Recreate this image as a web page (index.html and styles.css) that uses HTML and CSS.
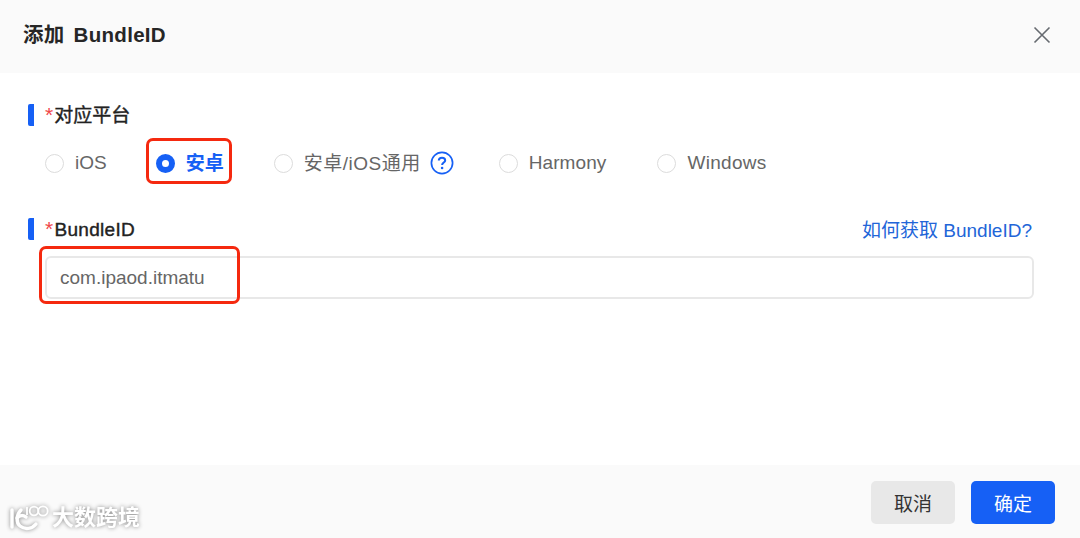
FILE: index.html
```html
<!DOCTYPE html>
<html lang="zh-CN">
<head>
  <meta charset="UTF-8">
  <title>添加 BundleID</title>
  <link rel="stylesheet" href="styles.css">
</head>
<body>
  <div class="dialog">
    <div class="dialog-header">
      <span class="dialog-title">添加 BundleID</span>
      <svg class="close-icon" width="18" height="18" viewBox="0 0 18 18"><path d="M1.5 1.5 L16.5 16.5 M16.5 1.5 L1.5 16.5" stroke="#666a70" stroke-width="1.6" fill="none"/></svg>
    </div>

    <div class="dialog-body">
      <div class="field field-platform">
        <div class="field-label"><span class="req">*</span>对应平台</div>
        <div class="radios">
          <label class="radio radio-ios"><i class="dot"></i>iOS</label>
          <label class="radio radio-android checked"><i class="dot"></i><span class="cjk-text">安卓</span></label>
          <label class="radio radio-both"><i class="dot"></i><span class="cjk-text both-text">安卓/iOS通用</span>
            <svg class="help-icon" width="24" height="24" viewBox="0 0 24 24"><circle cx="12" cy="12" r="10.6" fill="none" stroke="#1660f5" stroke-width="1.7"/><path d="M8.8 9.6 C8.8 7.7 10.2 6.7 12 6.7 C13.9 6.7 15.2 7.8 15.2 9.4 C15.2 11.4 12.1 11.7 12.1 14" fill="none" stroke="#1660f5" stroke-width="2"/><circle cx="12.1" cy="17" r="1.3" fill="#1660f5"/></svg>
          </label>
          <label class="radio radio-harmony"><i class="dot"></i>Harmony</label>
          <label class="radio radio-windows"><i class="dot"></i>Windows</label>
        </div>
      </div>

      <div class="field">
        <div class="label-row">
          <div class="field-label bundle-label"><span class="req">*</span>BundleID</div>
          <a class="help-link">如何获取 BundleID?</a>
        </div>
        <div class="input">com.ipaod.itmatu</div>
      </div>
    </div>

    <div class="dialog-footer">
      <button class="btn btn-cancel">取消</button>
      <button class="btn btn-ok">确定</button>
    </div>
  </div>

  <!-- red marks drawn on top of the screenshot -->
  <div class="mark mark-radio"></div>
  <div class="mark mark-input"></div>

  <div class="watermark">
    <svg width="42" height="30" viewBox="0 0 42 30"><g fill="none" stroke="#fff" stroke-width="3.4" stroke-linecap="round"><path d="M4 7 L4 24"/><path d="M13 7 C8 12 8 20 12 23 C17 27 24 26 28 21"/><path d="M9 15 C12 12 15 12 18 14"/></g><g fill="none" stroke="#fff" stroke-width="1.8"><path d="M19 4 L19 12"/><circle cx="26" cy="8" r="4.3"/><circle cx="35" cy="8" r="4.7"/></g></svg>
    <span class="watermark-text">大数跨境</span>
  </div>
</body>
</html>
```

FILE: styles.css
```css
* {
  box-sizing: border-box;
}
html, body {
  margin: 0;
  height: 100%;
}
body {
  position: relative;
  overflow: hidden;
  background: #fff;
  font-family: "Liberation Sans", "Noto Sans CJK SC", sans-serif;
  color: #222;
}
.dialog {
  display: flex;
  flex-direction: column;
  height: 538px;
}
.dialog-header {
  height: 73px;
  background: #fafafa;
  display: flex;
  align-items: center;
  justify-content: space-between;
  padding: 0 29px 4px 23px;
}
.dialog-title {
  font-size: 20.5px;
  font-weight: 600;
  word-spacing: 3px;
  letter-spacing: 0.3px;
  color: #262626;
  margin-bottom: 4px;
}
.dialog-body {
  flex: 1;
  padding: 31px 46px 0 28px;
}
.field-platform {
  margin-bottom: 40px;
}
.field-label {
  border-left: 6px solid #1660f5;
  border-radius: 2px;
  height: 22px;
  line-height: 24px;
  padding-left: 11px;
  font-size: 19px;
  font-weight: 400;
  color: #222;
  -webkit-text-stroke: 0.4px #222;
}
.bundle-label {
  letter-spacing: 0.3px;
}
.req {
  color: #f0474a;
  font-size: 21px;
  line-height: 1;
  margin-right: 1px;
  -webkit-text-stroke: 0;
}
.radios {
  display: flex;
  align-items: center;
  height: 24px;
  margin-top: 25px;
  padding-left: 17px;
}
.radio {
  display: flex;
  align-items: center;
  font-size: 19px;
  color: #666;
}
.radio-ios {
  margin-right: 49px;
}
.radio-android {
  margin-right: 50px;
}
.radio-both {
  margin-right: 45px;
}
.cjk-text {
  margin-bottom: 3px;
}
.both-text {
  letter-spacing: 0.5px;
}
.radio-harmony {
  letter-spacing: 0.1px;
  margin-right: 51px;
}
.radio-windows {
  letter-spacing: 0.3px;
}
.dot {
  width: 19px;
  height: 19px;
  border: 1.5px solid #dcdcdc;
  border-radius: 50%;
  margin-right: 11px;
  background: #fff;
}
.checked {
  color: #1660f5;
  font-weight: 600;
}
.checked .dot {
  border: 6.5px solid #1660f5;
}
.help-icon {
  margin-left: 9px;
}
.label-row {
  display: flex;
  justify-content: space-between;
  align-items: center;
}
.help-link {
  font-size: 19px;
  color: #2265d8;
  margin-right: 2px;
}
.input {
  margin: 14px 0 0 17px;
  height: 43px;
  line-height: 39px;
  border: 2px solid #e8e8e8;
  border-radius: 6px;
  padding-left: 13px;
  font-size: 19px;
  color: #666;
}
.dialog-footer {
  height: 73px;
  background: #fafafa;
  display: flex;
  justify-content: flex-end;
  gap: 16px;
  padding: 16px 25px 0 0;
}
.btn {
  width: 84px;
  height: 43px;
  border: none;
  border-radius: 5px;
  font-family: inherit;
  font-size: 19px;
  font-weight: 400;
}
.btn-cancel {
  background: #e8e8e8;
  color: #333;
}
.btn-ok {
  background: #1660f5;
  color: #fff;
}
.mark {
  position: absolute;
  border: 3.5px solid #f5290f;
  border-radius: 7px;
}
.mark-radio {
  left: 146px;
  top: 138px;
  width: 86px;
  height: 46px;
}
.mark-input {
  left: 39px;
  top: 246px;
  width: 201px;
  height: 58px;
}
.watermark {
  position: absolute;
  left: 8px;
  top: 503px;
  display: flex;
  align-items: flex-start;
  gap: 2px;
  filter: drop-shadow(0 0 2px #888);
}
.watermark-text {
  font-size: 22px;
  line-height: 22px;
  margin-top: 4px;
  font-weight: 700;
  color: #fff;
}
```
